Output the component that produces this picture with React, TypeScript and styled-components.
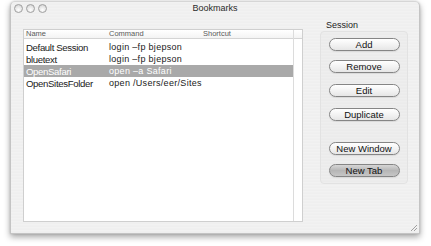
import styled, { createGlobalStyle } from 'styled-components';

const GlobalStyle = createGlobalStyle`
  html, body {
    margin: 0;
    padding: 0;
    background: #ffffff;
  }
  body {
    font-family: "Liberation Sans", Arial, sans-serif;
  }
`;

const Page = styled.div`
  width: 431px;
  height: 246px;
  padding: 1px 0 0 10px;
  box-sizing: border-box;
`;

const Window = styled.div`
  width: 410px;
  height: 233px;
  display: flex;
  flex-direction: column;
  border-radius: 5px 5px 0 0;
  border: 1px solid #c4c4c4;
  border-top-color: #d6d6d6;
  box-sizing: border-box;
  background: repeating-linear-gradient(180deg, #f2f2f2 0px, #f2f2f2 1px, #eeeeee 2px, #f0f0f0 3px);
  box-shadow: 0 3px 6px rgba(0, 0, 0, 0.35), 0 0 2px rgba(0, 0, 0, 0.15);
  position: relative;
`;

const TitleBar = styled.div`
  height: 12px;
  display: flex;
  align-items: center;
  padding: 0 0 0 3px;
  position: relative;
`;

const Lights = styled.div`
  display: flex;
  gap: 3px;
`;

const Light = styled.span`
  width: 7px;
  height: 7px;
  border-radius: 50%;
  border: 1px solid #a0a0a0;
  background: radial-gradient(circle at 50% 70%, #ffffff 0%, #e6e6e6 55%, #cacaca 100%);
`;

const Title = styled.div`
  position: absolute;
  left: 0;
  right: 0;
  top: 0;
  text-align: center;
  font-size: 9px;
  line-height: 12px;
  color: #2a2a2a;
`;

const Body = styled.div`
  flex: 1;
  display: flex;
  padding: 15px 11px 11px 12px;
  gap: 17px;
`;

const Table = styled.div`
  width: 280px;
  display: flex;
  border: 1px solid #cfcfcf;
  background: #ffffff;
`;

const TableMain = styled.div`
  flex: 1;
  display: flex;
  flex-direction: column;
`;

const Header = styled.div`
  height: 8px;
  display: grid;
  grid-template-columns: 83px 94px 1fr;
  border-bottom: 1px solid #d4d4d4;
  background: linear-gradient(180deg, #ffffff, #f3f3f3);
`;

const HeadCell = styled.div`
  font-size: 7.5px;
  line-height: 8px;
  color: #5a5a5a;
  padding-left: 2px;
`;

const Row = styled.div<{ $selected?: boolean }>`
  height: 12px;
  display: grid;
  grid-template-columns: 83px 94px 1fr;
  align-items: center;
  background: ${(p) => (p.$selected ? '#a9a9a9' : 'transparent')};
  color: ${(p) => (p.$selected ? '#ffffff' : '#1a1a1a')};
`;

const NameCell = styled.div`
  font-size: 9.6px;
  letter-spacing: -0.35px;
  padding-left: 2px;
  white-space: nowrap;
`;

const CmdCell = styled.div`
  font-size: 9px;
  letter-spacing: 0.3px;
  padding-left: 2px;
  white-space: nowrap;
`;

const Gap = styled.div`
  height: 2px;
`;

const ScrollStrip = styled.div`
  width: 8px;
  border-left: 1px solid #dcdcdc;
  display: flex;
  flex-direction: column;
`;

const StripHead = styled.div`
  height: 8px;
  border-bottom: 1px solid #d4d4d4;
  background: linear-gradient(180deg, #ffffff, #f3f3f3);
`;

const Side = styled.div`
  display: flex;
  flex-direction: column;
`;

const GroupLabel = styled.div`
  font-size: 9px;
  color: #222222;
  margin: -9px 0 1px 6px;
  line-height: 10px;
`;

const Group = styled.div`
  width: 88px;
  height: 153px;
  box-sizing: border-box;
  border: 1px solid #e2e2e2;
  border-radius: 4px;
  background: rgba(0, 0, 0, 0.015);
  display: flex;
  flex-direction: column;
  align-items: center;
  padding-top: 6px;
`;

const Button = styled.div<{ $pressed?: boolean; $space?: number }>`
  width: 71px;
  height: 13px;
  box-sizing: border-box;
  margin-top: ${(p) => p.$space ?? 0}px;
  border: 1px solid #858585;
  border-radius: 7px;
  display: flex;
  align-items: center;
  justify-content: center;
  font-size: 9.5px;
  color: #111111;
  box-shadow: 0 1px 1px rgba(0, 0, 0, 0.08);
  background: ${(p) =>
    p.$pressed
      ? 'linear-gradient(180deg, #d6d6d6 0%, #b6b6b6 50%, #c6c6c6 100%)'
      : 'linear-gradient(180deg, #ffffff 0%, #f3f3f3 50%, #e6e6e6 100%)'};
`;

const Grip = styled.svg`
  position: absolute;
  right: 1px;
  bottom: 1px;
`;

const rows = [
  { name: 'Default Session', cmd: 'login \u2013fp bjepson' },
  { name: 'bluetext', cmd: 'login \u2013fp bjepson' },
  { name: 'OpenSafari', cmd: 'open \u2013a Safari', selected: true },
  { name: 'OpenSitesFolder', cmd: 'open /Users/eer/Sites' },
];

export default function App() {
  return (
    <Page>
      <GlobalStyle />
      <Window>
        <TitleBar>
          <Lights>
            <Light />
            <Light />
            <Light />
          </Lights>
          <Title>Bookmarks</Title>
        </TitleBar>
        <Body>
          <Table>
            <TableMain>
              <Header>
                <HeadCell>Name</HeadCell>
                <HeadCell>Command</HeadCell>
                <HeadCell>Shortcut</HeadCell>
              </Header>
              <Gap />
              {rows.map((r) => (
                <Row key={r.name} $selected={r.selected}>
                  <NameCell>{r.name}</NameCell>
                  <CmdCell>{r.cmd}</CmdCell>
                  <div />
                </Row>
              ))}
            </TableMain>
            <ScrollStrip>
              <StripHead />
            </ScrollStrip>
          </Table>
          <Side>
            <GroupLabel>Session</GroupLabel>
            <Group>
              <Button>Add</Button>
              <Button $space={9}>Remove</Button>
              <Button $space={11}>Edit</Button>
              <Button $space={11}>Duplicate</Button>
              <Button $space={21}>New Window</Button>
              <Button $pressed $space={9}>New Tab</Button>
            </Group>
          </Side>
        </Body>
        <Grip width="8" height="8" viewBox="0 0 8 8">
          <path d="M7 1L1 7M7 4L4 7" stroke="#a0a0a0" strokeWidth="1" />
        </Grip>
      </Window>
    </Page>
  );
}
